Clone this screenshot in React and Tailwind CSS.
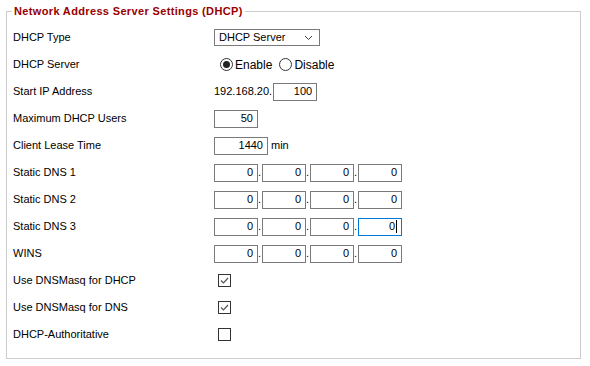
import React from 'react';

const Row = ({ label, children }) => (
    <div className="flex h-[27px] items-center">
        <div className="w-[201px] shrink-0">{label}</div>
        <div className="flex items-center">{children}</div>
    </div>
);

const Box = ({ value, w = 'w-[44px]', focus }) => (
    <div
        className={`flex h-[18px] ${w} items-center justify-end border pr-[4px] ${
            focus ? 'border-[#0078d7]' : 'border-[#7a7a7a]'
        }`}
    >
        {value}
        {focus && <span className="ml-px h-[13px] w-px bg-black" />}
    </div>
);

const Ip = ({ focusLast }) => (
    <>
        <Box value="0" />
        <span className="w-[4px] text-left">.</span>
        <Box value="0" />
        <span className="w-[4px] text-left">.</span>
        <Box value="0" />
        <span className="w-[4px] text-left">.</span>
        <Box value="0" focus={focusLast} />
    </>
);

const Radio = ({ on }) => (
    <span className="flex h-[13px] w-[13px] items-center justify-center rounded-full border border-[#333]">
        {on && <span className="h-[7px] w-[7px] rounded-full bg-[#222]" />}
    </span>
);

const Check = ({ on }) => (
    <span className="ml-[4px] flex h-[13px] w-[13px] items-center justify-center border border-[#333]">
        {on && (
            <svg width="11" height="11" viewBox="0 0 11 11">
                <path d="M2 5.5 L4.5 8 L9 3" fill="none" stroke="#555" strokeWidth="1.2" />
            </svg>
        )}
    </span>
);

export default function App() {
    return (
        <div className="h-[366px] w-[590px] bg-white pl-[6px] pt-[4px] text-[11px] text-black [font-family:'Liberation_Sans',Arial,sans-serif]">
            <fieldset className="w-[575px] border border-[#cccccc] pb-[10px] pl-[6px]">
                <legend className="ml-[-1px] px-[2px] text-[11px] font-bold leading-[14px] tracking-[0.35px] text-[#990000]">
                    Network Address Server Settings (DHCP)
                </legend>
                <div className="pt-[6px]">
                    <Row label="DHCP Type">
                        <div className="flex h-[17px] w-[106px] items-center justify-between border border-[#7a7a7a] pl-[4px] pr-[6px]">
                            <span>DHCP Server</span>
                            <svg width="9" height="6" viewBox="0 0 9 6">
                                <path d="M1 1 L4.5 4.5 L8 1" fill="none" stroke="#444" strokeWidth="1" />
                            </svg>
                        </div>
                    </Row>
                    <Row label="DHCP Server">
                        <span className="ml-[6px]"><Radio on /></span>
                        <span className="ml-[2px] mr-[7px] text-[12px]">Enable</span>
                        <Radio />
                        <span className="ml-[2px] text-[12px]">Disable</span>
                    </Row>
                    <Row label="Start IP Address">
                        <span className="mr-[1px]">192.168.20.</span>
                        <Box value="100" />
                    </Row>
                    <Row label="Maximum DHCP Users">
                        <Box value="50" />
                    </Row>
                    <Row label="Client Lease Time">
                        <Box value="1440" w="w-[54px]" />
                        <span className="ml-[3px]">min</span>
                    </Row>
                    <Row label="Static DNS 1"><Ip /></Row>
                    <Row label="Static DNS 2"><Ip /></Row>
                    <Row label="Static DNS 3"><Ip focusLast /></Row>
                    <Row label="WINS"><Ip /></Row>
                    <Row label="Use DNSMasq for DHCP"><Check on /></Row>
                    <Row label="Use DNSMasq for DNS"><Check on /></Row>
                    <Row label="DHCP-Authoritative"><Check /></Row>
                </div>
            </fieldset>
        </div>
    );
}
